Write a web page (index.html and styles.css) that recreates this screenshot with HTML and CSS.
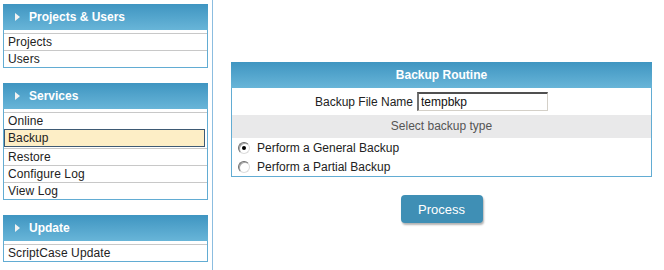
FILE: index.html
```html
<!DOCTYPE html>
<html>
<head>
<meta charset="utf-8">
<link rel="stylesheet" href="styles.css">
</head>
<body>
<div class="sidebar">
  <div class="panel">
    <div class="panel-head"><span class="tri"></span>Projects &amp; Users</div>
    <div class="panel-list">
      <div class="item">Projects</div>
      <div class="item">Users</div>
    </div>
  </div>
  <div class="panel">
    <div class="panel-head"><span class="tri"></span>Services</div>
    <div class="panel-list">
      <div class="item">Online</div>
      <div class="item selected">Backup</div>
      <div class="item">Restore</div>
      <div class="item">Configure Log</div>
      <div class="item">View Log</div>
    </div>
  </div>
  <div class="panel">
    <div class="panel-head"><span class="tri"></span>Update</div>
    <div class="panel-list">
      <div class="item">ScriptCase Update</div>
    </div>
  </div>
</div>
<div class="divider"></div>
<div class="main">
  <div class="routine">
    <div class="routine-head">Backup Routine</div>
    <div class="routine-body">
      <div class="field-row">
        <label class="field-label">Backup File Name</label>
        <input class="field-input" type="text" value="tempbkp">
      </div>
      <div class="section-row">Select backup type</div>
      <div class="opt"><span class="radio checked"></span>Perform a General Backup</div>
      <div class="opt"><span class="radio"></span>Perform a Partial Backup</div>
    </div>
  </div>
  <div class="actions"><button class="btn">Process</button></div>
</div>
</body>
</html>
```

FILE: styles.css
```css
html, body {
  margin: 0;
  padding: 0;
  height: 270px;
  background: #fff;
}
body {
  display: flex;
  align-items: flex-start;
  font-family: "Liberation Sans", Arial, sans-serif;
  font-size: 12px;
  color: #222;
}
.sidebar {
  width: 205px;
  margin-left: 3px;
  padding-top: 4px;
}
.panel {
  margin-bottom: 15px;
}
.panel-head {
  height: 26px;
  line-height: 26px;
  background: linear-gradient(#3f95c1, #68b5d8);
  color: #fff;
  font-weight: bold;
  font-size: 12px;
  display: flex;
  align-items: center;
  padding-left: 12px;
}
.tri {
  width: 0;
  height: 0;
  border-top: 4px solid transparent;
  border-bottom: 4px solid transparent;
  border-left: 5px solid #f2f2f2;
  margin-right: 9px;
  margin-top: -1px;
}
.panel-list {
  border: 1px solid #62acd3;
  border-top: none;
  padding-top: 3px;
}
.item {
  border-top: 1px solid #c8c8c8;
  height: 16px;
  line-height: 17px;
  padding-left: 4px;
  white-space: nowrap;
  letter-spacing: 0.1px;
}
.item.selected {
  border: 1px solid #3e5a74;
  background: #fdeec6;
  padding-left: 3px;
  margin-right: 2px;
  margin-bottom: 1px;
}
.divider {
  align-self: stretch;
  width: 1px;
  margin-left: 4px;
  background: #8bbde0;
}
.main {
  padding-left: 18px;
  padding-top: 62px;
  width: 421px;
}
.routine-head {
  height: 26px;
  line-height: 26px;
  background: linear-gradient(#3f95c1, #68b5d8);
  color: #fff;
  font-weight: bold;
  text-align: center;
}
.routine-body {
  border: 1px solid #62acd3;
  border-top: none;
}
.field-row {
  display: grid;
  grid-template-columns: 181px auto;
  column-gap: 4px;
  align-items: center;
  height: 27px;
}
.field-label {
  text-align: right;
  color: #222;
}
.field-input {
  box-sizing: border-box;
  width: 131px;
  height: 19px;
  margin: 0;
  padding: 0 2px;
  font-family: "Liberation Sans", Arial, sans-serif;
  font-size: 12px;
  color: #111;
  border-style: solid;
  border-width: 2px 1px 1px 2px;
  border-color: #505050 #d4d0c8 #d4d0c8 #707070;
  outline: none;
}
.section-row {
  height: 23px;
  line-height: 23px;
  background: #e9e9ea;
  color: #555;
  text-align: center;
}
.opt {
  height: 19px;
  display: flex;
  align-items: center;
  padding-left: 6px;
  color: #222;
}
.radio {
  box-sizing: border-box;
  width: 12px;
  height: 12px;
  border-radius: 50%;
  border: 1px solid;
  border-color: #6e6e6e #dcdcdc #dcdcdc #6e6e6e;
  background: #fff;
  box-shadow: inset 1px 1px 0 #a8a8a8;
  margin-right: 7px;
  display: flex;
  align-items: center;
  justify-content: center;
}
.radio.checked::after {
  content: "";
  width: 4px;
  height: 4px;
  border-radius: 50%;
  background: #000;
}
.actions {
  display: flex;
  justify-content: center;
  padding-top: 18px;
}
.btn {
  width: 82px;
  height: 28px;
  border: none;
  border-radius: 4px;
  background: #3f8fb5;
  color: #fff;
  font-family: "Liberation Sans", Arial, sans-serif;
  font-size: 13px;
  box-shadow: 1px 2px 2px rgba(0, 0, 0, 0.3);
  padding: 0;
}
```
